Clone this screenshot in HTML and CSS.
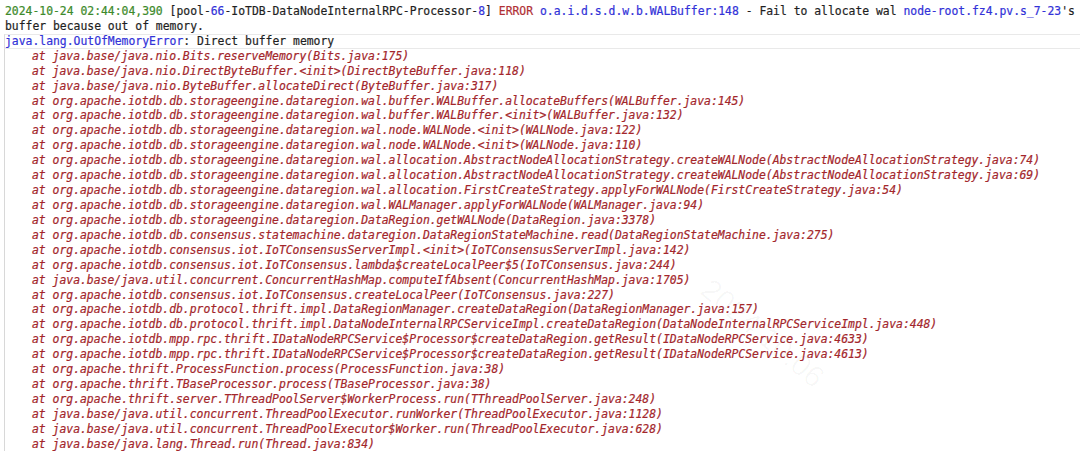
FILE: index.html
```html
<!DOCTYPE html>
<html>
<head>
<meta charset="utf-8">
<link rel="stylesheet" href="styles.css">
</head>
<body>
<div class="log">
  <div class="line"><span class="ts">2024-10-24 02:44:04,390</span> [pool-<span class="num">66</span>-IoTDB-DataNodeInternalRPC-Processor-<span class="num">8</span>] <span class="err">ERROR</span> <span class="num">o.a.i.d.s.d.w.b.WALBuffer:148</span> - Fail to allocate wal <span class="num">node-root.fz4.pv.s_7-23</span>'s</div>
  <div class="line">buffer because out of memory.</div>
  <div class="line current"><span class="num">java.lang.OutOfMemoryError</span>: Direct buffer memory</div>
  <div class="trace">
    <div class="line">at java.base/java.nio.Bits.reserveMemory(Bits.java:175)</div>
    <div class="line">at java.base/java.nio.DirectByteBuffer.&lt;init&gt;(DirectByteBuffer.java:118)</div>
    <div class="line">at java.base/java.nio.ByteBuffer.allocateDirect(ByteBuffer.java:317)</div>
    <div class="line">at org.apache.iotdb.db.storageengine.dataregion.wal.buffer.WALBuffer.allocateBuffers(WALBuffer.java:145)</div>
    <div class="line">at org.apache.iotdb.db.storageengine.dataregion.wal.buffer.WALBuffer.&lt;init&gt;(WALBuffer.java:132)</div>
    <div class="line">at org.apache.iotdb.db.storageengine.dataregion.wal.node.WALNode.&lt;init&gt;(WALNode.java:122)</div>
    <div class="line">at org.apache.iotdb.db.storageengine.dataregion.wal.node.WALNode.&lt;init&gt;(WALNode.java:110)</div>
    <div class="line">at org.apache.iotdb.db.storageengine.dataregion.wal.allocation.AbstractNodeAllocationStrategy.createWALNode(AbstractNodeAllocationStrategy.java:74)</div>
    <div class="line">at org.apache.iotdb.db.storageengine.dataregion.wal.allocation.AbstractNodeAllocationStrategy.createWALNode(AbstractNodeAllocationStrategy.java:69)</div>
    <div class="line">at org.apache.iotdb.db.storageengine.dataregion.wal.allocation.FirstCreateStrategy.applyForWALNode(FirstCreateStrategy.java:54)</div>
    <div class="line">at org.apache.iotdb.db.storageengine.dataregion.wal.WALManager.applyForWALNode(WALManager.java:94)</div>
    <div class="line">at org.apache.iotdb.db.storageengine.dataregion.DataRegion.getWALNode(DataRegion.java:3378)</div>
    <div class="line">at org.apache.iotdb.db.consensus.statemachine.dataregion.DataRegionStateMachine.read(DataRegionStateMachine.java:275)</div>
    <div class="line">at org.apache.iotdb.consensus.iot.IoTConsensusServerImpl.&lt;init&gt;(IoTConsensusServerImpl.java:142)</div>
    <div class="line">at org.apache.iotdb.consensus.iot.IoTConsensus.lambda$createLocalPeer$5(IoTConsensus.java:244)</div>
    <div class="line">at java.base/java.util.concurrent.ConcurrentHashMap.computeIfAbsent(ConcurrentHashMap.java:1705)</div>
    <div class="line">at org.apache.iotdb.consensus.iot.IoTConsensus.createLocalPeer(IoTConsensus.java:227)</div>
    <div class="line">at org.apache.iotdb.db.protocol.thrift.impl.DataRegionManager.createDataRegion(DataRegionManager.java:157)</div>
    <div class="line">at org.apache.iotdb.db.protocol.thrift.impl.DataNodeInternalRPCServiceImpl.createDataRegion(DataNodeInternalRPCServiceImpl.java:448)</div>
    <div class="line">at org.apache.iotdb.mpp.rpc.thrift.IDataNodeRPCService$Processor$createDataRegion.getResult(IDataNodeRPCService.java:4633)</div>
    <div class="line">at org.apache.iotdb.mpp.rpc.thrift.IDataNodeRPCService$Processor$createDataRegion.getResult(IDataNodeRPCService.java:4613)</div>
    <div class="line">at org.apache.thrift.ProcessFunction.process(ProcessFunction.java:38)</div>
    <div class="line">at org.apache.thrift.TBaseProcessor.process(TBaseProcessor.java:38)</div>
    <div class="line">at org.apache.thrift.server.TThreadPoolServer$WorkerProcess.run(TThreadPoolServer.java:248)</div>
    <div class="line">at java.base/java.util.concurrent.ThreadPoolExecutor.runWorker(ThreadPoolExecutor.java:1128)</div>
    <div class="line">at java.base/java.util.concurrent.ThreadPoolExecutor$Worker.run(ThreadPoolExecutor.java:628)</div>
    <div class="line">at java.base/java.lang.Thread.run(Thread.java:834)</div>
  </div>
  <div class="watermark">2024.10.06</div>
</div>
</body>
</html>
```
FILE: styles.css
```css
html, body {
  margin: 0;
  padding: 0;
  background: #ffffff;
  overflow: hidden;
}
.log {
  position: relative;
  height: 451px;
  padding: 4px 0 0 5px;
  box-sizing: border-box;
  font-family: "DejaVu Sans Mono", "Liberation Mono", monospace;
  font-size: 11.4px;
  line-height: 14.93px;
  color: #1f1f1f;
  -webkit-text-stroke: 0.2px currentColor;
}
.line {
  white-space: pre;
  height: 14.93px;
}
.current {
  border-top: 1px solid #e9e9e9;
  border-bottom: 1px solid #e9e9e9;
  border-left: 1px solid #dcdcdc;
  margin-left: -1px;
  height: 12.93px;
  line-height: 12.93px;
}
.ts { color: #3d8a2b; }
.num { color: #3232d8; }
.err { color: #b02f35; }
.trace {
  border-left: 1px solid #d8d8d8;
  margin-left: -1px;
  padding-left: 27px;
  color: #a3262b;
  font-style: italic;
}
.watermark {
  position: absolute;
  left: 705px;
  top: 278px;
  transform: rotate(40deg);
  transform-origin: left center;
  font-family: "Liberation Sans", sans-serif;
  font-size: 30px;
  color: rgba(0, 0, 0, 0.03);
  -webkit-text-stroke: 0;
  pointer-events: none;
}
```
